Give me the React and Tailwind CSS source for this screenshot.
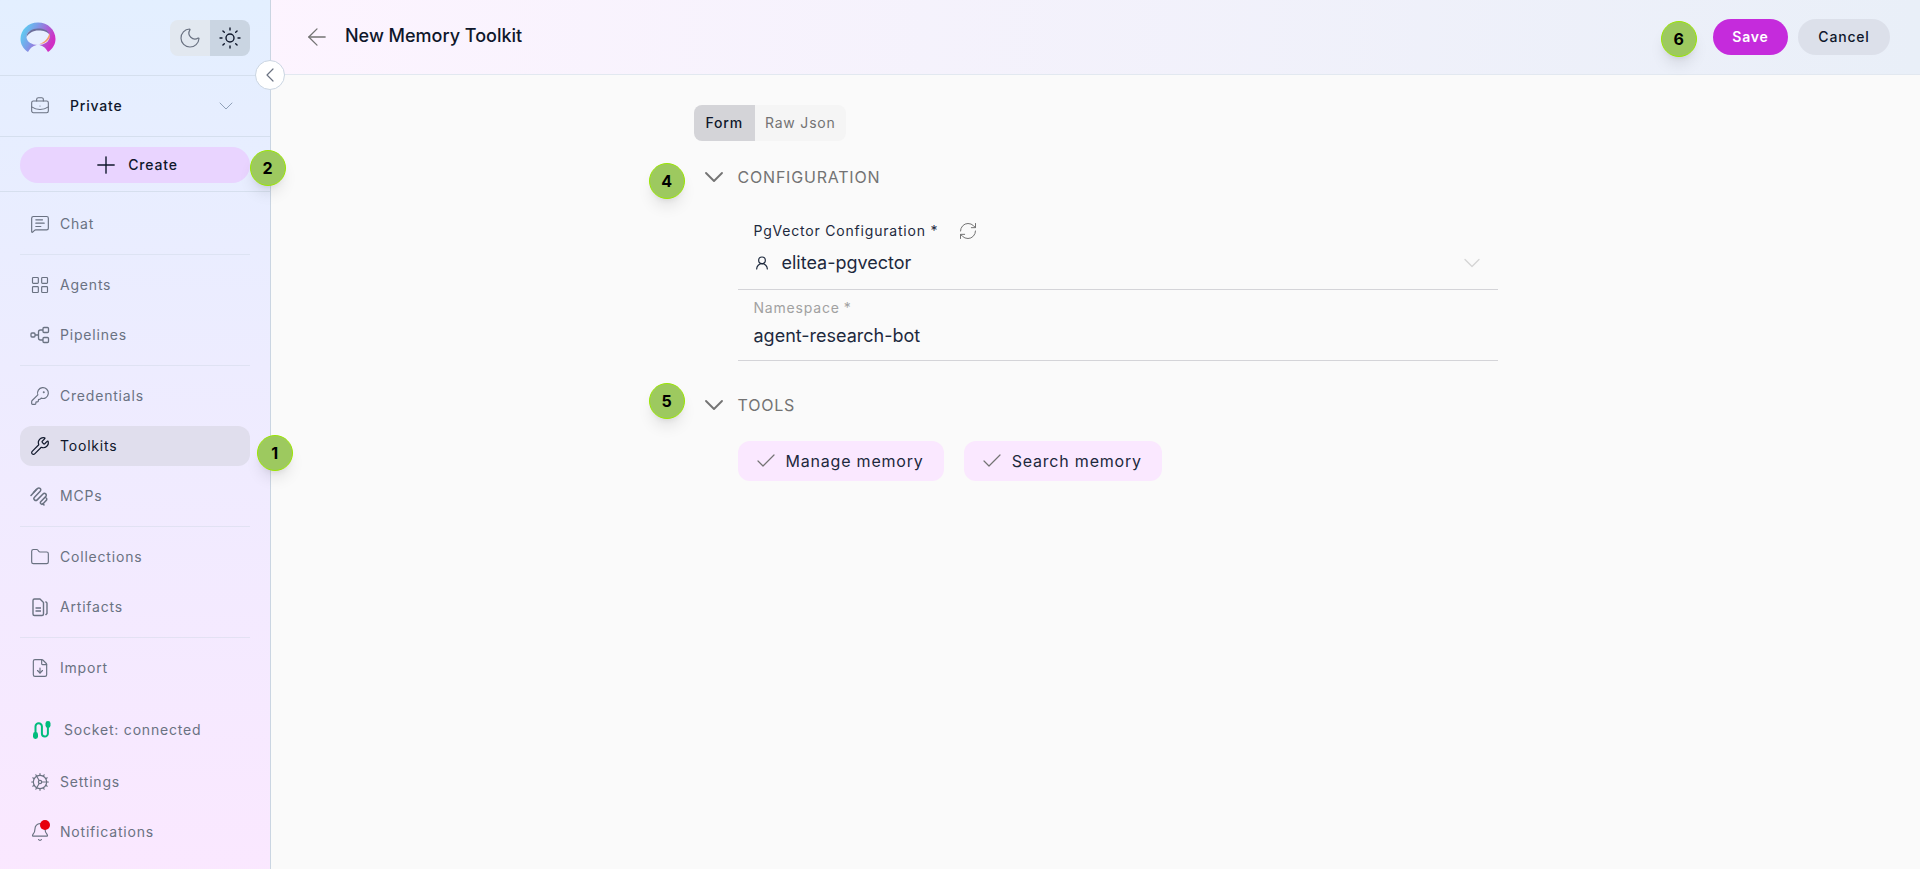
import React from "react";
import {
  ArrowLeft,
  Bell,
  BriefcaseBusiness,
  Check,
  ChevronDown,
  ChevronLeft,
  Cog,
  FileDown,
  Folder,
  KeyRound,
  LayoutGrid,
  MessageSquareText,
  Moon,
  Plus,
  RefreshCw,
  Sun,
  UserRound,
  Wrench,
} from "lucide-react";

function Logo() {
  return (
    <svg viewBox="0 0 36 32" className="h-8 w-9">
      <defs>
        <linearGradient id="logoRing" x1="0" y1="0" x2="1" y2="0.4">
          <stop offset="0" stopColor="#4fe3f5" />
          <stop offset="0.45" stopColor="#7d9be8" />
          <stop offset="1" stopColor="#d02fc4" />
        </linearGradient>
      </defs>
      <path
        d="M18 0.5C8 0.5 0.5 8 0.5 17c0 5 2.5 9.5 7.5 13 3-5 6-7 10-7s7 2 10 7c5-3.5 7.500-8 7.500-13C35.500 8 28 0.500 18 0.500z"
        fill="url(#logoRing)"
      />
      <ellipse cx="18" cy="15" rx="11.500" ry="8" fill="#e6efff" />
      <path d="M6.500 15C7 9.500 12 6.500 18 6.500s10 2 11 5c-2-1.500-5-3-10.500-3C13 8.500 9 11 6.500 15z" fill="#6d6f9c" />
      <path d="M29.500 11c-1 5-5 9.500-10 11 5 0 9.500-3.500 10.500-8z" fill="#f59a6c" />
    </svg>
  );
}

function PipelinesIcon({ className }) {
  return (
    <svg viewBox="0 0 20 20" fill="none" stroke="currentColor" strokeWidth="1.300" className={className}>
      <rect x="1" y="8" width="4" height="4" rx="1" />
      <rect x="13" y="2.500" width="5.500" height="5" rx="1" />
      <rect x="13" y="12.500" width="5.500" height="5" rx="1" />
      <path d="M5 10h3M13 5h-2.500C9 5 8.500 6 8.500 7v6c0 1 .5 2 2 2H13" />
    </svg>
  );
}

function McpIcon({ className }) {
  return (
    <svg viewBox="0 0 20 20" fill="none" stroke="currentColor" strokeWidth="1.500" strokeLinecap="round" className={className}>
      <path d="M1 9.500 7.500 2.500a1.900 1.900 0 0 1 2.700 2.700L4.500 11.200a1.900 1.900 0 0 0 2.700 2.700l5.800-6a1.900 1.900 0 0 1 2.700 2.700l-4.800 5a1.500 1.500 0 0 0 2.200 2.200l3-3.200a1.900 1.900 0 0 0 .3-2.400" />
      <path d="M3.500 6.500 6.500 3.200M12.800 17.500l1.200 1.500" />
    </svg>
  );
}

function ArtifactsIcon({ className }) {
  return (
    <svg viewBox="0 0 20 20" fill="none" stroke="currentColor" strokeWidth="1.400" strokeLinejoin="round" className={className}>
      <path d="M3 3.500A1.500 1.500 0 0 1 4.500 2H10l3.500 3.500V17a1.500 1.500 0 0 1-1.500 1.500H4.500A1.500 1.500 0 0 1 3 17z" />
      <path d="M5.500 11h5.500M5.500 14h5.500M15.500 4.500 17 6v10.500l-1.500 1.500" />
    </svg>
  );
}

function SocketIcon({ className }) {
  return (
    <svg viewBox="0 0 20 20" className={className}>
      <path
        d="M3.500 14V6.500a3.200 3.200 0 0 1 6.400 0v7a3 3 0 0 0 6 0V6"
        fill="none"
        stroke="currentColor"
        strokeWidth="2"
      />
      <rect x="1" y="12" width="5" height="7" rx="2.400" fill="currentColor" />
      <rect x="13.500" y="1" width="5" height="7" rx="2.400" fill="currentColor" />
    </svg>
  );
}

function Badge({ n, className }) {
  return (
    <div
      className={`absolute z-20 flex h-9 w-9 items-center justify-center rounded-full border border-lime-400 bg-[#9dc95f] text-base font-bold text-black shadow-lg ${className}`}
    >
      {n}
    </div>
  );
}

function NavItem({ icon: Icon, label, active }) {
  return (
    <div
      className={`flex h-10 items-center gap-2.5 rounded-xl px-2.5 text-sm ${
        active ? "bg-[#e0deed] text-slate-900" : "text-gray-500"
      }`}
    >
      <Icon className="h-5 w-5 shrink-0" strokeWidth={1.4} />
      <span>{label}</span>
    </div>
  );
}

function Divider() {
  return <div className="h-px bg-slate-300/40" />;
}

function Sidebar() {
  return (
    <aside className="relative flex w-[271px] shrink-0 flex-col border-r border-slate-300 bg-gradient-to-b from-[#e3efff] to-fuchsia-100">
      {/* Logo + theme */}
      <div className="flex h-[76px] items-center justify-between border-b border-slate-300/60 px-5">
        <Logo />
        <div className="flex h-9 overflow-hidden rounded-lg">
          <div className="flex w-10 items-center justify-center bg-slate-200 text-gray-500">
            <Moon className="h-6 w-6" strokeWidth={1.2} />
          </div>
          <div className="flex w-10 items-center justify-center bg-slate-300 text-slate-900">
            <Sun className="h-6 w-6" strokeWidth={1.4} />
          </div>
        </div>
      </div>

      {/* Workspace */}
      <div className="flex h-[61px] items-center border-b border-slate-300/60 pl-7.5 pr-8 text-sm font-medium text-slate-900">
        <BriefcaseBusiness className="h-5 w-5 text-gray-500" strokeWidth={1.3} />
        <span className="ml-5 flex-1">Private</span>
        <ChevronDown className="h-6 w-6 text-slate-400" strokeWidth={1} />
      </div>

      {/* Create */}
      <div className="border-b border-slate-300/60 px-5 pb-2 pt-2.5">
        <div className="flex h-9 items-center justify-center gap-2 rounded-full bg-purple-200 text-sm font-medium text-slate-900">
          <Plus className="h-7 w-7" strokeWidth={1.2} />
          Create
        </div>
      </div>

      {/* Nav */}
      <nav className="flex flex-1 flex-col gap-2.5 px-5 pt-3">
        <NavItem icon={MessageSquareText} label="Chat" />
        <Divider />
        <NavItem icon={LayoutGrid} label="Agents" />
        <NavItem icon={PipelinesIcon} label="Pipelines" />
        <Divider />
        <NavItem icon={KeyRound} label="Credentials" />
        <NavItem icon={Wrench} label="Toolkits" active />
        <NavItem icon={McpIcon} label="MCPs" />
        <Divider />
        <NavItem icon={Folder} label="Collections" />
        <NavItem icon={ArtifactsIcon} label="Artifacts" />
        <Divider />
        <NavItem icon={FileDown} label="Import" />

        <div className="mt-3 flex h-10 items-center gap-3 px-3 text-sm text-gray-500">
          <SocketIcon className="h-5 w-5 text-emerald-500" />
          Socket: connected
        </div>
        <div className="mt-0.5 flex flex-col gap-2.5">
          <NavItem icon={Cog} label="Settings" />
          <div className="relative">
            <NavItem icon={Bell} label="Notifications" />
            <span className="absolute left-5 top-2 h-2.5 w-2.5 rounded-full bg-red-600" />
          </div>
        </div>
      </nav>

      <button className="absolute left-[255px] top-[60px] z-10 flex h-[30px] w-[30px] items-center justify-center rounded-full border border-slate-300 bg-white text-gray-500">
        <ChevronLeft className="h-6 w-6" strokeWidth={1.2} />
      </button>
    </aside>
  );
}

function SectionHeader({ label }) {
  return (
    <div className="flex h-6 items-center gap-2 pl-1">
      <ChevronDown className="h-8 w-8 text-neutral-500" strokeWidth={1.4} />
      <span className="text-base uppercase text-neutral-500">{label}</span>
    </div>
  );
}

function ToolChip({ label }) {
  return (
    <div className="flex h-10 items-center gap-2 rounded-xl bg-fuchsia-100 pl-4 pr-5 text-base text-slate-800">
      <Check className="h-6 w-6 text-neutral-500" strokeWidth={1.2} />
      {label}
    </div>
  );
}

export default function App() {
  return (
    <div className="relative flex h-screen overflow-hidden bg-neutral-50 font-['Inter',sans-serif] tracking-wider">
      <Sidebar />

      <main className="flex flex-1 flex-col">
        {/* Header */}
        <header className="flex h-[75px] shrink-0 items-center border-b border-slate-200 bg-gradient-to-r from-fuchsia-50 to-[#e9eff8] pl-8 pr-[30px]">
          <ArrowLeft className="h-7 w-7 text-neutral-500" strokeWidth={1.1} />
          <h1 className="ml-3.5 flex-1 pb-0.5 text-lg font-medium tracking-normal text-slate-900">New Memory Toolkit</h1>
          <button className="flex h-9 w-[75px] items-center justify-center rounded-full bg-[#c52bdc] text-sm font-semibold text-white">
            Save
          </button>
          <button className="ml-2.5 flex h-9 w-[92px] items-center justify-center rounded-full bg-[#dce0ea] text-sm font-medium text-slate-900">
            Cancel
          </button>
        </header>

        {/* Form */}
        <div className="mx-auto w-[804px] pt-7.5">
          <div className="flex h-9 w-fit overflow-hidden rounded-lg text-sm">
            <div className="flex items-center bg-zinc-300 px-3 font-medium text-slate-900">Form</div>
            <div className="flex items-center bg-neutral-100 px-2.5 text-neutral-500">Raw Json</div>
          </div>

          <div className="mt-6">
            <SectionHeader label="Configuration" />
            <div className="ml-11 mt-8">
              <div className="border-b border-zinc-300 pb-3 pl-4">
                <div className="flex h-5 items-center text-sm text-slate-800">
                  PgVector Configuration *
                  <RefreshCw className="ml-5 h-5 w-5 text-neutral-500" strokeWidth={1.2} />
                </div>
                <div className="mt-2 flex h-7 items-center pr-3 text-lg tracking-normal text-slate-800">
                  <UserRound className="h-4 w-4" strokeWidth={1.8} />
                  <span className="ml-3 flex-1">elitea-pgvector</span>
                  <ChevronDown className="h-7 w-7 text-neutral-300" strokeWidth={1.100} />
                </div>
              </div>
              <div className="border-b border-zinc-300 pb-2.5 pl-4 pt-2.5">
                <div className="flex h-4 items-center text-sm text-neutral-400">
                  Namespace<span className="ml-1">*</span>
                </div>
                <div className="mt-1.5 flex h-7 items-center text-lg tracking-normal text-slate-800">agent-research-bot</div>
              </div>
            </div>
          </div>

          <div className="mt-8">
            <SectionHeader label="Tools" />
            <div className="ml-11 mt-6 flex gap-5">
              <ToolChip label="Manage memory" />
              <ToolChip label="Search memory" />
            </div>
          </div>
        </div>
      </main>

      {/* Step markers */}
      <Badge n="1" className="left-[257px] top-[435px]" />
      <Badge n="2" className="left-[250px] top-[150px]" />
      <Badge n="4" className="left-[649px] top-[163px]" />
      <Badge n="5" className="left-[649px] top-[383px]" />
      <Badge n="6" className="left-[1661px] top-[21px]" />
    </div>
  );
}
